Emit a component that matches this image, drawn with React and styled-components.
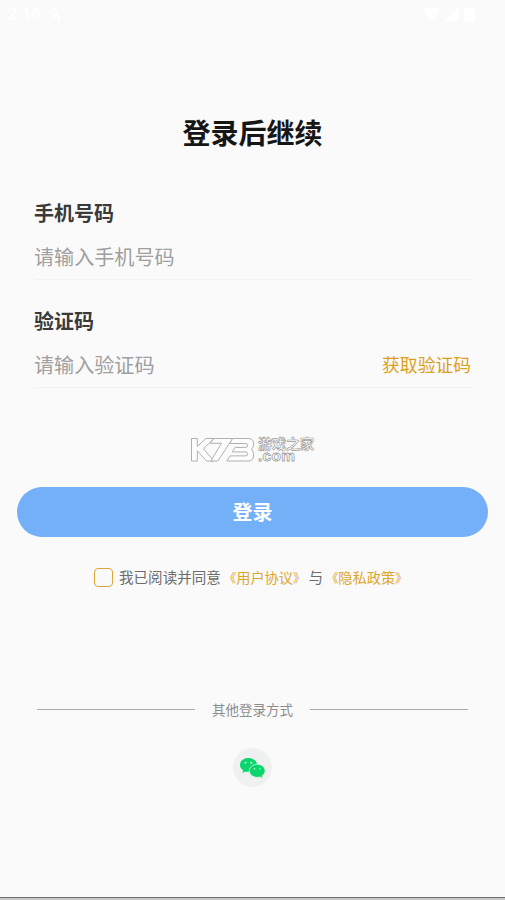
import React from "react";
import styled, { createGlobalStyle } from "styled-components";

const GlobalStyle = createGlobalStyle`
  * { box-sizing: border-box; }
  body {
    margin: 0;
    background: #fafafa;
    font-family: "Noto Sans CJK SC", "Noto Sans", sans-serif;
  }
`;

const Screen = styled.div`
  width: 505px;
  height: 900px;
  display: flex;
  flex-direction: column;
  background: #fafafa;
  overflow: hidden;
`;

const StatusBar = styled.header`
  height: 28px;
  padding: 0 30px 0 8px;
  display: flex;
  align-items: center;
  justify-content: space-between;
  color: #fff;
  font: 700 16.5px/28px Roboto, sans-serif;
`;

const StatusGroup = styled.div`
  display: flex;
  align-items: center;
  gap: ${(p) => p.$gap}px;
`;

const Title = styled.h1`
  margin: 84px 0 0;
  height: 41px;
  text-align: center;
  font-size: 28px;
  line-height: 41px;
  font-weight: 700;
  color: #161616;
`;

const Form = styled.form`
  padding: 45px 34px 0;
  display: flex;
  flex-direction: column;
  gap: 26px;
`;

const Field = styled.div`
  height: 82px;
  display: flex;
  flex-direction: column;
  border-bottom: 1px solid #f2f2f2;
`;

const Label = styled.label`
  height: 30px;
  font-size: 20px;
  line-height: 30px;
  font-weight: 700;
  color: #3a3a3a;
`;

const InputRow = styled.div`
  height: 51px;
  padding-top: 14px;
  display: flex;
  justify-content: space-between;
  align-items: flex-start;
`;

const Placeholder = styled.span`
  font-size: 20.1px;
  line-height: 30px;
  color: #9f9f9f;
`;

const CodeLink = styled.span`
  font-size: 17.8px;
  line-height: 28px;
  color: #dba01c;
`;

const Watermark = styled.div`
  height: 28px;
  margin: 48px 0 0 190px;
  display: flex;
  gap: 3px;
`;

const LoginButton = styled.button`
  height: 50px;
  margin: 23px 17px 0;
  padding: 0;
  border: 0;
  border-radius: 25px;
  background: #74b0f8;
  color: #fff;
  font: 700 20px/50px "Noto Sans CJK SC", sans-serif;
`;

const Agreement = styled.div`
  height: 22px;
  margin: 29px 0 0 94px;
  display: flex;
  align-items: center;
  font-size: 14.55px;
  line-height: 22px;
  color: #6c6c6c;
  white-space: nowrap;
`;

const Checkbox = styled.span`
  width: 19px;
  height: 19px;
  margin-right: 6px;
  border: 1px solid #dfa43a;
  border-radius: 4px;
`;

const Policy = styled.span`
  margin: 0 3px;
  font-size: 14.2px;
  color: #dfa62c;
`;

const Bracket = styled.span`
  font-size: 12.4px;
`;

const Divider = styled.div`
  height: 20px;
  margin: 111px 37px 0;
  display: flex;
  align-items: center;
  justify-content: space-between;
  font-size: 13.5px;
  line-height: 20px;
  color: #8d8d8d;
`;

const Rule = styled.span`
  width: 158px;
  height: 1px;
  background: #aaa;
`;

const WechatButton = styled.div`
  width: 39px;
  height: 39px;
  margin: 29px 0 0 233px;
  border-radius: 50%;
  background: #eff0f0;
  display: flex;
  align-items: center;
  justify-content: center;
`;

const BottomEdge = styled.footer`
  height: 3px;
  margin-top: auto;
  border-top: 1px solid #707070;
  background: #c9c9c9;
`;

const TouchIcon = () => (
  <svg width="16" height="18" viewBox="0 0 16 18" fill="none" stroke="#fff" strokeWidth="1.8">
    <path d="M2 8 6 3l6 4-3 3-5-2M7 8l6 3v6M11 13l-4-2" />
  </svg>
);

const WifiIcon = () => (
  <svg width="17" height="14" viewBox="0 0 17 14" fill="#fff">
    <path d="M0 3Q8.500-3 17 3L8.500 14Z" />
  </svg>
);

const SignalIcon = () => (
  <svg width="14" height="14" viewBox="0 0 14 14" fill="#fff">
    <path d="M14 0v14H0Z" />
  </svg>
);

const BatteryIcon = () => (
  <svg width="11" height="15" viewBox="0 0 11 15" fill="#fff">
    <path d="M3 1h5v1h3v13H0V2h3Z" />
  </svg>
);

const K73Mark = () => (
  <svg width="65" height="26" viewBox="0 0 65 26" fill="#fdfdfd" stroke="#b0b0b0" strokeWidth="1">
    <path d="M1.500 2.500h5.800v8L16 2.500h8L13.400 12.800 24 25h-7.500L7.300 14.700V25H1.500Z" />
    <path d="M24 2.500h18.700L27.800 25h-7L31.500 7.300H20.200Z" />
    <path d="M42.700 2.500H58q5.500 0 5.500 5v1.700q0 3.200-2.500 4.200 2.500 1.200 2.500 4V20q0 5-5.500 5H36.800l3.400-5.100h15.500q2 0 2-2.200 0-1.800-2-1.800H42.200l3-4.500h10.500q2 0 2-2 0-1.900-2-1.900H39.500Z" />
  </svg>
);

const WatermarkText = () => (
  <svg width="60" height="30" viewBox="0 0 60 30" overflow="visible" fill="#fff" strokeLinejoin="round">
    <text
      x="0"
      y="12.700"
      fontFamily="Noto Sans CJK SC, sans-serif"
      fontSize="14"
      fontWeight="700"
      stroke="#a0a0a0"
      strokeWidth=".7"
    >
      游戏之家
    </text>
    <text
      x="0"
      y="25"
      fontFamily="Liberation Sans, sans-serif"
      fontSize="15.500"
      fontWeight="700"
      textLength="37"
      stroke="#a0a0a0"
      strokeWidth=".8"
    >
      .com
    </text>
  </svg>
);

const WechatIcon = () => (
  <svg width="27" height="22" viewBox="0 0 27 22">
    <g fill="#0bd66e">
      <path d="M9.500 1C4.700 1 1 4 1 7.900c0 2.300 1.200 4.200 3.200 5.400l-.8 2.700 3.200-1.600c1 .3 1.900.4 2.900.4 4.700 0 8.500-3 8.500-6.900S14.200 1 9.500 1Z" />
      <path
        stroke="#eff0f0"
        strokeWidth=".7"
        d="M18.200 7.300c-4.400 0-7.900 2.800-7.900 6.500s3.500 6.500 7.900 6.500c.9 0 1.800-.1 2.600-.4l3 1.500-.7-2.600c1.900-1.200 3-3 3-5 0-3.700-3.500-6.500-7.900-6.500Z"
      />
    </g>
    <g fill="#c9f8dd">
      <circle cx="6.500" cy="5.700" r="1" />
      <circle cx="12.200" cy="5.700" r="1" />
      <circle cx="15.600" cy="11.800" r=".8" />
      <circle cx="20.800" cy="11.800" r=".8" />
    </g>
  </svg>
);

const PolicyLink = ({ children }) => (
  <Policy>
    <Bracket>《</Bracket>
    {children}
    <Bracket>》</Bracket>
  </Policy>
);

export default function App() {
  return (
    <>
      <GlobalStyle />
      <Screen>
        <StatusBar>
          <StatusGroup $gap={5}>
            <span>2:16</span>
            <TouchIcon />
          </StatusGroup>
          <StatusGroup $gap={5}>
            <WifiIcon />
            <SignalIcon />
            <BatteryIcon />
          </StatusGroup>
        </StatusBar>
        <Title>登录后继续</Title>
        <Form>
          <Field>
            <Label>手机号码</Label>
            <InputRow>
              <Placeholder>请输入手机号码</Placeholder>
            </InputRow>
          </Field>
          <Field>
            <Label>验证码</Label>
            <InputRow>
              <Placeholder>请输入验证码</Placeholder>
              <CodeLink>获取验证码</CodeLink>
            </InputRow>
          </Field>
        </Form>
        <Watermark>
          <K73Mark />
          <WatermarkText />
        </Watermark>
        <LoginButton type="button">登录</LoginButton>
        <Agreement>
          <Checkbox />
          <span>我已阅读并同意</span>
          <PolicyLink>用户协议</PolicyLink>
          <span>与</span>
          <PolicyLink>隐私政策</PolicyLink>
        </Agreement>
        <Divider>
          <Rule />
          <span>其他登录方式</span>
          <Rule />
        </Divider>
        <WechatButton>
          <WechatIcon />
        </WechatButton>
        <BottomEdge />
      </Screen>
    </>
  );
}
